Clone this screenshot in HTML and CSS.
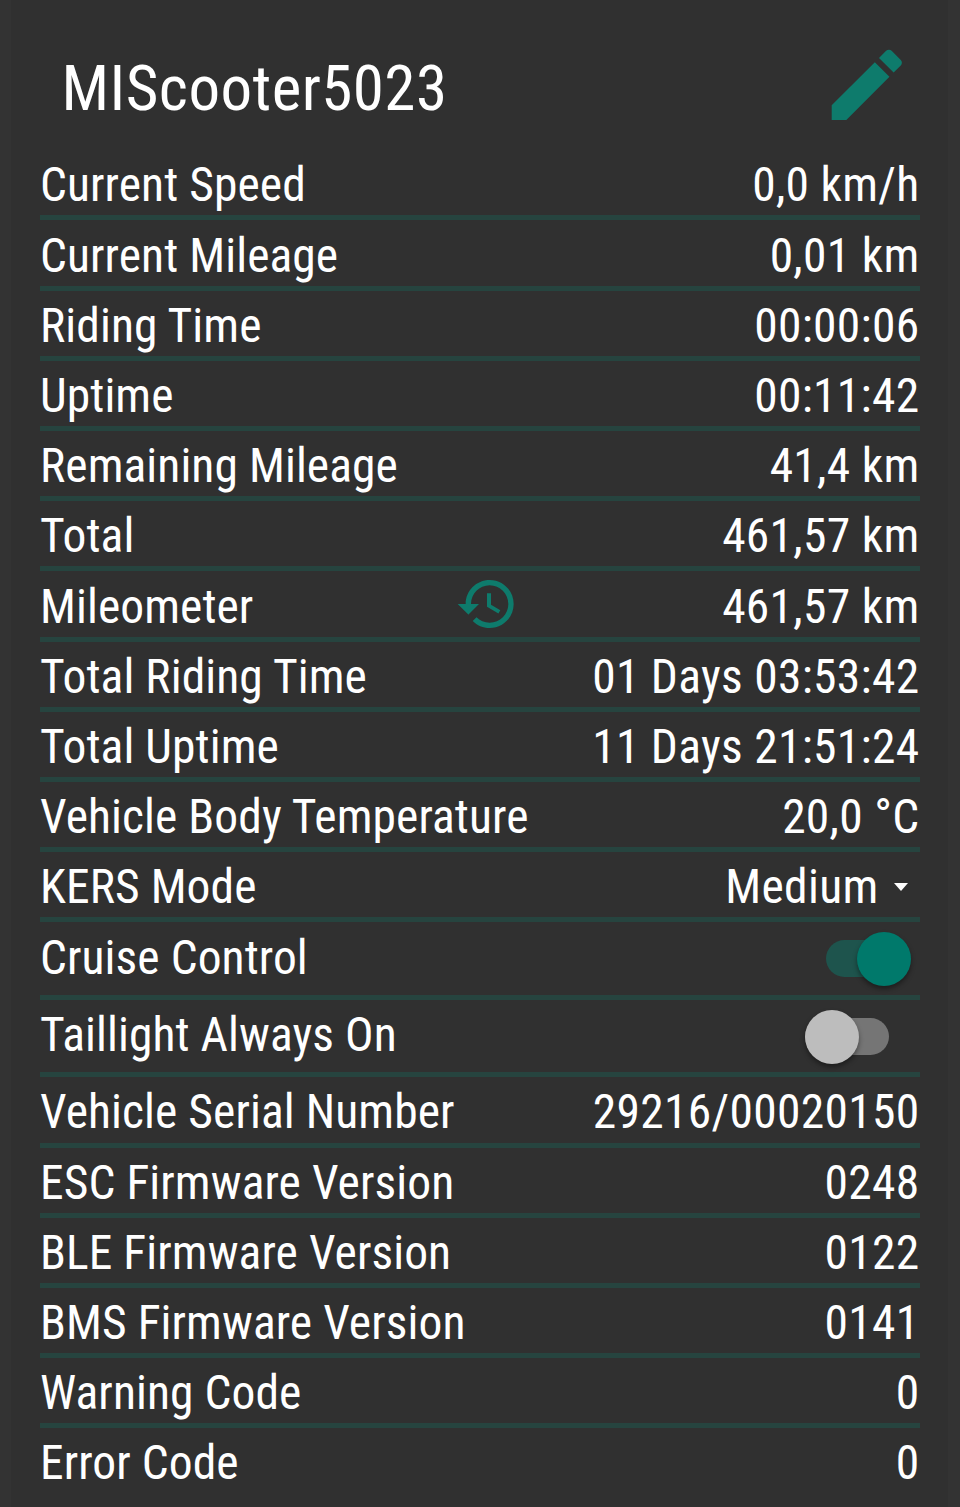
FILE: index.html
```html
<!DOCTYPE html>
<html>

<head>
    <title>MIScooter5023</title>
    <meta name="viewport" content="width=device-width, initial-scale=1">
    <link rel="stylesheet" href="styles.css">
</head>

<body>

<div class="card">
    <div class="title-row">
        <h1 class="title">MIScooter5023</h1>
        <svg class="edit-icon" viewBox="0 0 24 24"><path d="M3 17.25V21h3.75L17.81 9.94l-3.75-3.75L3 17.25zM20.71 7.04c.39-.39.39-1.02 0-1.41l-2.34-2.34c-.39-.39-1.02-.39-1.41 0l-1.83 1.83 3.75 3.75 1.83-1.83z"/></svg>
    </div>

    <div class="row"><span class="label">Current Speed</span><span class="value">0,0 km/h</span></div>
    <div class="row"><span class="label">Current Mileage</span><span class="value">0,01 km</span></div>
    <div class="row"><span class="label">Riding Time</span><span class="value">00:00:06</span></div>
    <div class="row"><span class="label">Uptime</span><span class="value">00:11:42</span></div>
    <div class="row"><span class="label">Remaining Mileage</span><span class="value">41,4 km</span></div>
    <div class="row"><span class="label">Total</span><span class="value">461,57 km</span></div>
    <div class="row row-icon">
        <span class="label">Mileometer</span>
        <svg class="history-icon" viewBox="0 0 24 24"><path d="M13 3c-4.97 0-9 4.03-9 9H1l3.89 3.89.07.14L9 12H6c0-3.87 3.13-7 7-7s7 3.13 7 7-3.13 7-7 7c-1.93 0-3.68-.79-4.94-2.06l-1.42 1.42C8.27 19.99 10.51 21 13 21c4.97 0 9-4.03 9-9s-4.03-9-9-9zm-1 5v5l4.28 2.54.72-1.21-3.5-2.08V8H12z"/></svg>
        <span class="value">461,57 km</span>
    </div>
    <div class="row"><span class="label">Total Riding Time</span><span class="value">01 Days 03:53:42</span></div>
    <div class="row"><span class="label">Total Uptime</span><span class="value">11 Days 21:51:24</span></div>
    <div class="row"><span class="label">Vehicle Body Temperature</span><span class="value">20,0 °C</span></div>
    <div class="row">
        <span class="label">KERS Mode</span>
        <span class="select"><span class="value">Medium</span><span class="caret"></span></span>
    </div>
    <div class="row row-switch">
        <span class="label">Cruise Control</span>
        <span class="switch switch-on"><span class="thumb"></span></span>
    </div>
    <div class="row row-switch">
        <span class="label">Taillight Always On</span>
        <span class="switch switch-off"><span class="thumb"></span></span>
    </div>
    <div class="row"><span class="label">Vehicle Serial Number</span><span class="value">29216/00020150</span></div>
    <div class="row"><span class="label">ESC Firmware Version</span><span class="value">0248</span></div>
    <div class="row"><span class="label">BLE Firmware Version</span><span class="value">0122</span></div>
    <div class="row"><span class="label">BMS Firmware Version</span><span class="value">0141</span></div>
    <div class="row"><span class="label">Warning Code</span><span class="value">0</span></div>
    <div class="row row-last"><span class="label">Error Code</span><span class="value">0</span></div>
</div>

</body>
</html>
```

FILE: styles.css
```css
* {
  box-sizing: border-box;
}

html, body {
  margin: 0;
  height: 100%;
  overflow: hidden;
  background-color: #333333;
}

body {
  font-family: Roboto, "Liberation Sans", sans-serif;
  font-stretch: 75%;
  color: #ffffff;
}

.card {
  margin-left: 11px;
  width: 937px;
  height: 1507px;
  padding: 0 28px 0 29px;
  background-color: #303030;
}

.title-row {
  height: 150.3px;
  display: flex;
  align-items: flex-start;
  justify-content: space-between;
  padding: 37.5px 6px 0 21.5px;
}

.title {
  margin: 16.5px 0 0 0;
  font-size: 63px;
  font-weight: 400;
  line-height: 70px;
  letter-spacing: 0.45px;
}

.edit-icon {
  width: 93.6px;
  height: 93.6px;
  fill: #0e7b6c;
}

.row {
  height: 70.2px;
  display: flex;
  align-items: center;
  justify-content: space-between;
  border-bottom: 5px solid #26443f;
  font-size: 47.5px;
  line-height: 60px;
}

.row-switch {
  height: 77.5px;
}

.row-icon {
  position: relative;
}

.row-last {
  border-bottom-color: transparent;
}

.label {
  padding-top: 5px;
  letter-spacing: 0.08px;
  white-space: nowrap;
}

.row-switch .label {
  padding-top: 0;
  margin-bottom: 2px;
}

.value {
  padding: 5px 0.5px 0 0;
  letter-spacing: 0.3px;
  white-space: nowrap;
}

/* the icon does not line up with anything else in its row */
.history-icon {
  position: absolute;
  left: 415px;
  top: 0.5px;
  width: 64px;
  height: 64px;
  fill: #0e7b6c;
}

.select {
  display: flex;
  align-items: center;
}

.caret {
  width: 0;
  height: 0;
  margin: 4px 12px 0 15px;
  border-left: 7.5px solid transparent;
  border-right: 7.5px solid transparent;
  border-top: 8px solid #ffffff;
}

.switch {
  position: relative;
  width: 84px;
  height: 37px;
  border-radius: 19px;
}

.switch-on {
  margin-right: 10px;
  background-color: #1e544d;
}

.switch-off {
  margin-right: 31px;
  background-color: #757575;
}

.thumb {
  position: absolute;
  top: -8px;
  width: 54px;
  height: 54px;
  border-radius: 50%;
  box-shadow: 0 3px 5px rgba(0, 0, 0, 0.4);
}

.switch-on .thumb {
  right: -1px;
  background-color: #00796b;
}

.switch-off .thumb {
  left: 0;
  background-color: #bdbdbd;
}
```
